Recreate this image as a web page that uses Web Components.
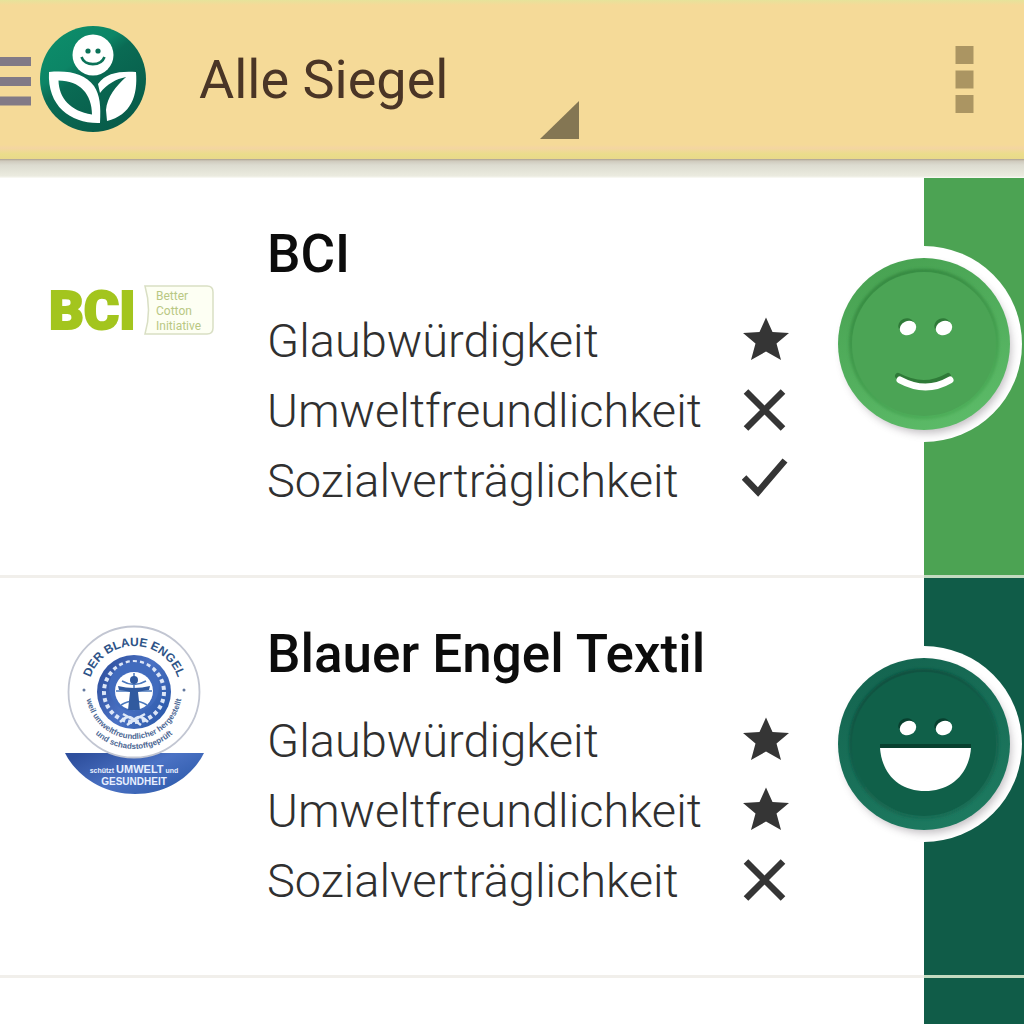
<!DOCTYPE html>
<html lang="de">
<head>
<meta charset="utf-8">
<meta name="viewport" content="width=device-width, initial-scale=1">
<title>Alle Siegel</title>
<style>
  html, body { margin: 0; background: #fff; }
  body { font-family: Roboto, "Noto Sans", sans-serif; min-height: 100vh; }
</style>
</head>
<body>
<siegel-app></siegel-app>

<template id="tpl-app">
  <style>
    :host { display: flex; flex-direction: column; height: 100vh; overflow: hidden; }
    main { flex: 1; min-height: 0; overflow: hidden; }
    .shade { height: 19px; background: linear-gradient(#aba18e 0, #cfcabd 2px, #dcdbd0 6px, #e6e6da 13px, #ebebe0 17px, #fbfbf7 19px); }
  </style>
  <app-bar></app-bar>
  <div class="shade"></div>
  <main>
    <label-card name="BCI" rating="good" scores="star cross check"><logo-bci slot="logo"></logo-bci></label-card>
    <label-card name="Blauer Engel Textil" rating="best" scores="star star cross"><logo-engel slot="logo"></logo-engel></label-card>
    <label-card rating="best"></label-card>
  </main>
</template>

<template id="tpl-bar">
  <style>
    :host { display: block; background: linear-gradient(#e6e39b 0, #f5da98 5px, #f5da98 145px, #f4d5a2 148px, #ebdd8b 154px, #e9d98a 159px); }
    header { display: flex; align-items: center; height: 159px; }
    button { border: 0; margin: 0; padding: 0; background: none; cursor: pointer; display: block; }
    svg { display: block; }
    .pick { display: grid; align-self: stretch; width: 387px; margin-left: 46px; }
    select, .pick svg { grid-area: 1 / 1; }
    select { appearance: none; border: 0; margin: 0; padding: 0 6px; background: none; color: #4a3526; font: 400 54px/160px Roboto, "Noto Sans", sans-serif; }
    .pick svg { place-self: end; margin-bottom: 20px; pointer-events: none; }
    .more { margin-left: auto; padding: 0 50px; }
  </style>
  <header>
    <button aria-label="Menü">
      <svg width="147" height="111" viewBox="0 24 147 111">
        <defs>
          <linearGradient id="g" x1="0" y1="0" x2=".7" y2="1"><stop offset="0" stop-color="#0d8f6b"/><stop offset=".38" stop-color="#0c8566"/><stop offset=".5" stop-color="#0a6b54"/><stop offset="1" stop-color="#075b49"/></linearGradient>
        </defs>
        <path fill="#827a86" d="M0 57h31v9H0zM0 77h31v9H0zM0 96.500h31v9H0z"/>
        <circle cx="93" cy="79" r="53" fill="url(#g)"/>
        <circle cx="93" cy="55" r="20.500" fill="#fff"/>
        <circle cx="88" cy="51" r="2.600" fill="#0b7258"/><circle cx="98" cy="51" r="2.600" fill="#0b7258"/>
        <path d="M81.500 57c3 9.500 19.500 9.500 23 0" fill="none" stroke="#0b7258" stroke-width="2.600"/>
        <path fill="#fff" fill-rule="evenodd" d="M49 72C70 70 85 74 94 86c6 9 7 20 6 37C72 124 47 107 49 72ZM58.500 80.500C59 98 70 111 92 114.500c0-20-12-34-33.500-34Z"/>
        <path fill="#fff" d="M136 72c-17-1-30 1-38 12l2 9c7-9 16-14 26-16-10 9-19 20-20 33l1 11c24-6 31-25 29-49Z"/>
      </svg>
    </button>
    <div class="pick">
      <select aria-label="Kategorie"><option>Alle Siegel</option></select>
      <svg width="40" height="40" viewBox="0 0 40 40"><path d="M39 1v38H0z" fill="#847653"/></svg>
    </div>
    <button class="more" aria-label="Weitere Optionen">
      <svg width="19" height="68" viewBox="0 0 19 68"><path fill="#ab9562" d="M.5 0h18v18h-18zM.5 24.500h18v18h-18zM.5 49h18v18h-18z"/></svg>
    </button>
  </header>
</template>

<template id="tpl-card">
  <style>
    :host { display: block; --side: #105c48; }
    :host([rating="good"]) { --side: #4ca353; }
    article { position: relative; display: grid; grid-template-columns: 267px 1fr 100px; height: 400px; box-sizing: border-box; }
    .logo { display: flex; justify-content: center; padding-top: 40px; border-bottom: 3px solid #f1efeb; }
    .info { padding: 39px 134px 0 0; border-bottom: 3px solid #f1efeb; }
    .side { background: var(--side); border-bottom: 3px solid #c3dac0; }
    h2 { margin: 0 0 15px; font: 500 53px/74px Roboto, "Noto Sans", sans-serif; color: #0c0c0c; white-space: nowrap; }
    face-badge { position: absolute; right: 0; top: 66px; }
  </style>
  <article>
    <div class="logo"><slot name="logo"></slot></div>
    <div class="info"></div>
    <div class="side"></div>
  </article>
</template>

<template id="tpl-score">
  <style>
    :host { display: flex; justify-content: space-between; align-items: center; height: 70px; font: 300 47px/70px Roboto, "Noto Sans", sans-serif; color: #303030; white-space: nowrap; }
    svg { display: block; flex: none; }
  </style>
  <span><slot></slot></span>
  <svg width="48" height="48" viewBox="0 1 48 48"></svg>
</template>

<template id="tpl-bci">
  <style>
    :host { display: block; }
    svg { display: block; }
    text { font-family: Roboto, "Liberation Sans", sans-serif; }
  </style>
  <svg width="170" height="184" viewBox="50 218 170 184" role="img" aria-label="BCI Better Cotton Initiative">
    <text x="50" y="329" font-size="54" font-weight="900" fill="#a3c51e" stroke="#a3c51e" stroke-width="2">BCI</text>
    <path d="M146 286h62q6 0 6 6v36q0 6-6 6h-62q7-24 0-48Z" fill="#fdfff3" stroke="#d9dfc4" stroke-width="1.500"/>
    <g font-size="12" fill="#b9c883"><text x="157" y="300">Better</text><text x="157" y="315">Cotton</text><text x="157" y="330">Initiative</text></g>
  </svg>
</template>

<template id="tpl-engel">
  <style>
    :host { display: block; }
    svg { display: block; }
    text { font-family: "Liberation Sans", sans-serif; text-anchor: middle; }
  </style>
  <svg width="150" height="184" viewBox="58 618 150 184" role="img" aria-label="Der Blaue Engel">
    <defs>
      <linearGradient id="b" x1="0" x2="1" y1=".2" y2=".8"><stop offset="0" stop-color="#2e4f9d"/><stop offset=".5" stop-color="#4b72c4"/><stop offset="1" stop-color="#2a58a8"/></linearGradient>
      <path id="top" d="M87 692a46 46 0 0 1 92 0"/>
      <path id="in" d="M85 691a48 48 0 0 0 96 0"/>
      <path id="out" d="M75 691a58 58 0 0 0 116 0"/>
    </defs>
    <path d="M64 753h139c-12 24-38 41-69 41s-58-17-70-41Z" fill="url(#b)"/>
    <circle cx="133" cy="692" r="65.500" fill="#fff" stroke="#c2c6d2" stroke-width="1.800"/>
    <circle cx="133" cy="692" r="37" fill="url(#b)"/>
    <circle cx="133" cy="692" r="30" fill="none" stroke="#dce6f7" stroke-width="4" stroke-dasharray="4 3"/>
    <circle cx="133" cy="687" r="25" fill="#416bbd"/>
    <circle cx="133" cy="691" r="19" fill="#fff"/>
    <path d="M115 691h36M133 673v38M121 681q12 7 24 0M120 705q13-8 26 0" fill="none" stroke="#4a78bd" stroke-width="1.500"/>
    <circle cx="133" cy="680" r="4" fill="#315a9f"/>
    <path d="M117 686q16 4 32 0l-1 4q-8 1-11 2l2 18h-12l2-18q-3-1-11-2Z" fill="#315a9f"/>
    <path d="M119 722q9-9 14-2 5-7 14 2M122 714q11 6 18 11M144 714q-11 6-18 11" fill="none" stroke="#dfe9f8" stroke-width="2.500"/>
    <circle cx="83" cy="690" r="1.500" fill="#63789e"/><circle cx="183" cy="690" r="1.500" fill="#63789e"/>
    <text font-size="12" font-weight="700" fill="#2d5387"><textPath href="#top" startOffset="50%">DER BLAUE ENGEL</textPath></text>
    <text font-size="8" font-weight="700" fill="#4c6793"><textPath href="#in" startOffset="50%">weil umweltfreundlicher hergestellt</textPath><textPath href="#out" startOffset="50%">und schadstoffgeprüft</textPath></text>
    <text x="133" y="773" font-size="7" font-weight="700" fill="#e8f0ff">schützt <tspan font-size="11">UMWELT</tspan> und</text>
    <text x="133" y="785" font-size="10" font-weight="700" fill="#e8f0ff">GESUNDHEIT</text>
  </svg>
</template>

<template id="tpl-face">
  <style>
    :host { display: block; }
    svg { display: block; }
  </style>
  <svg width="200" height="200" viewBox="-100 -100 200 200" role="img">
    <defs>
      <filter id="soft" x="-20%" y="-20%" width="140%" height="140%"><feGaussianBlur stdDeviation="4"/></filter>
      <filter id="inner" x="-20%" y="-20%" width="140%" height="140%"><feGaussianBlur stdDeviation="1.500"/></filter>
      <linearGradient id="rim" x1=".3" y1="0" x2=".7" y2="1"><stop class="r1" offset="0"/><stop class="r2" offset="1"/></linearGradient>
      <linearGradient id="edge" x1=".3" y1="0" x2=".7" y2="1"><stop class="e1" offset="0"/><stop class="e2" offset="1"/></linearGradient>
    </defs>
    <circle r="98" fill="#fff"/>
    <circle cx="3" cy="5" r="84" fill="#645a64" opacity=".4" filter="url(#soft)"/>
    <circle r="86" fill="url(#rim)"/>
    <circle r="73" fill="none" stroke="url(#edge)" stroke-width="4" filter="url(#inner)"/>
    <circle class="disc" r="72"/>
    <g class="dark" transform="translate(-2 -3)"><ellipse cx="-16" cy="-16" rx="8" ry="6.500" transform="rotate(-25 -16 -16)"/><ellipse cx="20" cy="-16" rx="8" ry="6.500" transform="rotate(-25 20 -16)"/></g>
    <g fill="#fff"><ellipse cx="-16" cy="-16" rx="8.500" ry="7" transform="rotate(-25 -16 -16)"/><ellipse cx="20" cy="-16" rx="8.500" ry="7" transform="rotate(-25 20 -16)"/></g>
    <g class="mouth"></g>
  </svg>
</template>

<script>
  const clone = id => document.getElementById(id).content.cloneNode(true);

  class TemplateElement extends HTMLElement {
    constructor() {
      super();
      this.attachShadow({ mode: 'open' }).append(clone(this.constructor.tpl));
    }
  }

  const ICONS = {
    star: '<path fill="#353535" d="M24 1.500l6.500 14.500L47 17 34.500 27.500 39 44 24 35.500 9 44l4.500-16.500L1 17l16.500-1Z"/>',
    cross: '<path fill="none" stroke="#353535" stroke-width="6.500" d="M4 5.500l37 37M41 5.500l-37 37"/>',
    check: '<path fill="none" stroke="#353535" stroke-width="6.500" d="M2 21.500L16 36 43 4.500"/>'
  };
  const WORDS = { star: 'sehr gut', cross: 'nicht erfüllt', check: 'erfüllt' };

  class ScoreRow extends TemplateElement {
    static tpl = 'tpl-score';
    connectedCallback() {
      const kind = this.getAttribute('kind');
      const svg = this.shadowRoot.querySelector('svg');
      svg.setAttribute('role', 'img');
      svg.setAttribute('aria-label', WORDS[kind]);
      svg.innerHTML = ICONS[kind];
    }
  }

  const FACES = {
    good: {
      r1: '#48a252', r2: '#5cbb68', e1: '#33863e', e2: '#4cad58', disc: '#4ba455', dark: '#2f7a38',
      mouth: '<path d="M-25 35q26 14 50 0" transform="translate(-1 -3)" fill="none" stroke="#2f7a38" stroke-width="6" stroke-linecap="round"/><path d="M-24 36q26 14 50 0" fill="none" stroke="#fff" stroke-width="7" stroke-linecap="round"/>'
    },
    best: {
      r1: '#146550', r2: '#1d7a60', e1: '#0b4d3c', e2: '#166c54', disc: '#106049', dark: '#08402f',
      mouth: '<path d="M-44 0H47v5H-44z" fill="#08402f"/><path d="M-44 4H47C45 31 26 47 1 47S-42 31-44 4Z" fill="#fff"/>'
    }
  };

  class FaceBadge extends TemplateElement {
    static tpl = 'tpl-face';
    connectedCallback() {
      const face = FACES[this.getAttribute('rating')];
      const root = this.shadowRoot;
      for (const k of ['r1', 'r2', 'e1', 'e2']) root.querySelector('.' + k).setAttribute('stop-color', face[k]);
      root.querySelector('.disc').setAttribute('fill', face.disc);
      root.querySelector('.dark').setAttribute('fill', face.dark);
      root.querySelector('.mouth').innerHTML = face.mouth;
      root.querySelector('svg').setAttribute('aria-label', 'Bewertung');
    }
  }

  const CRITERIA = ['Glaubwürdigkeit', 'Umweltfreundlichkeit', 'Sozialverträglichkeit'];

  class LabelCard extends TemplateElement {
    static tpl = 'tpl-card';
    connectedCallback() {
      const name = this.getAttribute('name');
      if (!name) return;
      const info = this.shadowRoot.querySelector('.info');
      const title = document.createElement('h2');
      title.textContent = name;
      info.append(title);
      this.getAttribute('scores').split(' ').forEach((kind, i) => {
        const row = document.createElement('score-row');
        row.setAttribute('kind', kind);
        row.textContent = CRITERIA[i];
        info.append(row);
      });
      const badge = document.createElement('face-badge');
      badge.setAttribute('rating', this.getAttribute('rating'));
      this.shadowRoot.querySelector('article').append(badge);
    }
  }

  customElements.define('score-row', ScoreRow);
  customElements.define('face-badge', FaceBadge);
  customElements.define('logo-bci', class extends TemplateElement { static tpl = 'tpl-bci'; });
  customElements.define('logo-engel', class extends TemplateElement { static tpl = 'tpl-engel'; });
  customElements.define('label-card', LabelCard);
  customElements.define('app-bar', class extends TemplateElement { static tpl = 'tpl-bar'; });
  customElements.define('siegel-app', class extends TemplateElement { static tpl = 'tpl-app'; });
</script>
</body>
</html>
